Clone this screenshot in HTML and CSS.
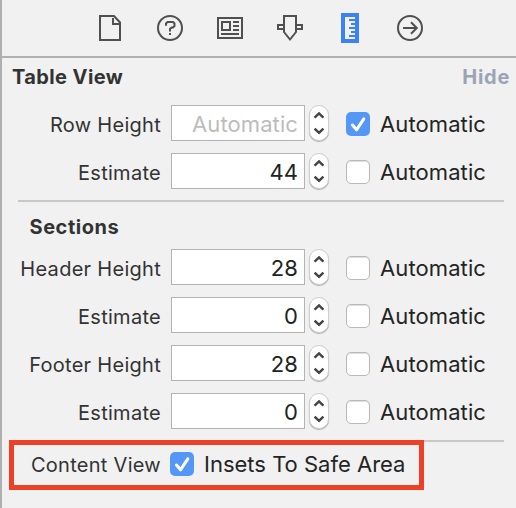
FILE: index.html
```html
<!DOCTYPE html>
<html lang="en">
<head>
<meta charset="utf-8">
<title>Size Inspector</title>
<link rel="stylesheet" href="styles.css">
</head>
<body>
<svg class="defs" width="0" height="0">
  <symbol id="stepper" viewBox="0 0 18 34"><path d="M4.600 11.600 9 7.400l4.400 4.200M4.600 22.600l4.400 4.200 4.400-4.200"/></symbol>
  <symbol id="tick" viewBox="0 0 24 24"><path d="m6.500 13 4 4.800 7.300-11"/></symbol>
</svg>
<main class="inspector">
  <nav class="tabs">
    <svg class="tab" viewBox="0 0 30 30"><path d="M5 3h14L25 9.500V27H5zM18 5v6h7"/></svg>
    <svg class="tab" viewBox="0 0 30 30"><circle cx="15" cy="15" r="12"/><path d="M11 12.800V10.500l1.500-1.500h5.500l1.500 1.500v2.500l-1.500 1.500h-1.500L15 16v2.500M15 20v2"/></svg>
    <svg class="tab" viewBox="0 0 30 30"><path d="M3 5h24v20H3zM7 9h8v8H7zM18 9h6M18 13h6M18 17h6M6 21h18"/></svg>
    <svg class="tab" viewBox="0 0 30 30"><path d="M9 3h12v16l-6 7.500L9 19zM9 12H3v4h6M21 12h6v4h-6"/></svg>
    <svg class="tab tab-active" viewBox="0 0 30 30"><path class="ruler" d="M6 0h18v30H6z"/><path class="scale" d="M10 4h10v2h-6v2h6v2h-4v2h4v2h-6v2h6v2h-4v2h4v2h-6v2h6v2H10z"/></svg>
    <svg class="tab" viewBox="0 0 30 30"><circle cx="15" cy="15" r="12"/><path d="M8 15h13.500M16 9.200l5.800 5.800-5.800 5.800"/></svg>
  </nav>
  <header class="heading"><h1>Table View</h1><span class="hide">Hide</span></header>
  <section class="rows">
    <div class="row"><label class="name">Row Height</label><span class="field placeholder">Automatic</span><svg class="stepper"><use href="#stepper"/></svg><span class="check checked"><svg><use href="#tick"/></svg></span><span class="option">Automatic</span></div>
    <div class="row"><label class="name">Estimate</label><span class="field">44</span><svg class="stepper"><use href="#stepper"/></svg><span class="check"></span><span class="option">Automatic</span></div>
  </section>
  <hr class="divider">
  <h2>Sections</h2>
  <section class="rows">
    <div class="row"><label class="name">Header Height</label><span class="field">28</span><svg class="stepper"><use href="#stepper"/></svg><span class="check"></span><span class="option">Automatic</span></div>
    <div class="row"><label class="name">Estimate</label><span class="field">0</span><svg class="stepper"><use href="#stepper"/></svg><span class="check"></span><span class="option">Automatic</span></div>
    <div class="row"><label class="name">Footer Height</label><span class="field">28</span><svg class="stepper"><use href="#stepper"/></svg><span class="check"></span><span class="option">Automatic</span></div>
    <div class="row"><label class="name">Estimate</label><span class="field">0</span><svg class="stepper"><use href="#stepper"/></svg><span class="check"></span><span class="option">Automatic</span></div>
  </section>
  <hr class="divider">
  <div class="highlight"><label class="name">Content View</label><span class="check checked"><svg><use href="#tick"/></svg></span><span class="option insets">Insets To Safe Area</span></div>
</main>
</body>
</html>
```
FILE: styles.css
```css
* { box-sizing: border-box; }
body { margin: 0; background: #f1f1f1; font-family: Inter, "Liberation Sans", sans-serif; color: #242424; }
.defs { display: block; position: absolute; }
.inspector { height: 508px; border-left: 2px solid #b0b0b0; overflow: hidden; }
.tabs { height: 58px; display: flex; justify-content: flex-start; gap: 30px; padding: 13px 0 0 93px; border-bottom: 2px solid #b1b1b1; }
.tab { width: 30px; height: 30px; fill: none; stroke: #505050; stroke-width: 2; }
.tab-active { stroke: none; }
.ruler { fill: #3b82f6; }
.scale { fill: #f1f1f1; }
.heading { height: 47px; display: flex; justify-content: space-between; padding: 7px 6px 0 10px; line-height: 24px; }
h1, h2, .hide { margin: 0; font-size: 20px; font-weight: 700; line-height: 24px; letter-spacing: .4px; color: #333; white-space: nowrap; }
.heading .hide { color: #9ba4b5; letter-spacing: .7px; }
h2 { height: 47px; padding: 13px 0 0 27.500px; letter-spacing: .55px; }
.rows { display: flex; flex-direction: column; gap: 12px; }
.row { height: 36px; display: flex; align-items: center; }
.name { width: 159px; margin-right: 10px; text-align: right; font-size: 20px; line-height: 24px; letter-spacing: .28px; color: #333; white-space: nowrap; position: relative; top: 2px; }
.field { width: 134px; height: 36px; padding: 2px 6px 0 0; border: 1px solid #b3b3b3; background: #fff; text-align: right; font-size: 22px; line-height: 33px; color: #222; letter-spacing: .1px; }
.placeholder { color: #bcbcbc; }
.stepper { width: 20px; height: 36px; margin: 0 17px 0 4px; border: 1px solid #cfcfcf; border-radius: 10px; background: #fff; box-shadow: 0 1px 1px #aaa; fill: none; stroke: #444; stroke-width: 2.5; }
.check { width: 24px; height: 24px; margin-top: 2px; flex: none; border: 1px solid #b9b9b9; border-radius: 5px; background: #fff; box-shadow: inset 0 1px 1px #ddd; }
.checked { border: 0; background: #5497f7; box-shadow: none; }
.check svg { display: block; width: 24px; height: 24px; fill: none; stroke: #fff; stroke-width: 3; stroke-linecap: round; stroke-linejoin: round; }
.option { margin-left: 10px; padding-top: 1px; font-size: 22px; line-height: 30px; letter-spacing: .1px; white-space: nowrap; }
.divider { height: 2px; margin: 11px 12px 0 16px; border: 0; background: #c8c8c8; }
.highlight { width: 415px; height: 50px; margin: -2px 0 0 7px; border: 5px solid #ee4027; display: flex; align-items: center; position: relative; }
.highlight .name { width: 147px; margin-right: 9px; top: 0; }
.highlight .check { margin-top: -2px; }
.highlight .option { padding: 0; margin-top: -2px; letter-spacing: 0; }
```
